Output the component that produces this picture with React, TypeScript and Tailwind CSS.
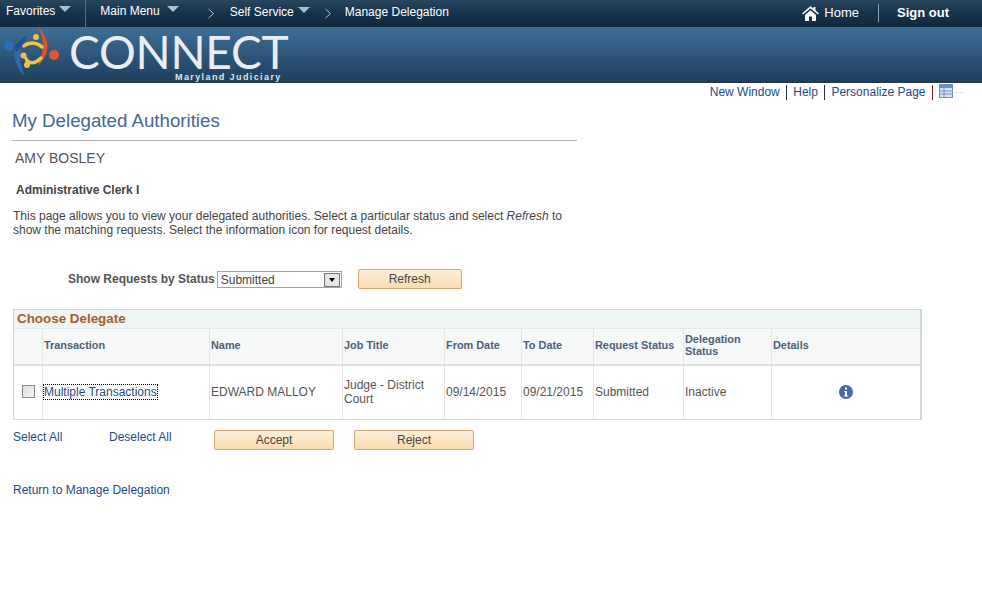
const COLUMNS = [
  { label: "", width: "w-[29px]" },
  { label: "Transaction", width: "w-[167px]" },
  { label: "Name", width: "w-[133px]" },
  { label: "Job Title", width: "w-[102px]" },
  { label: "From Date", width: "w-[77px]" },
  { label: "To Date", width: "w-[72px]" },
  { label: "Request Status", width: "w-[90px]" },
  { label: "Delegation Status", width: "w-[88px]" },
  { label: "Details", width: "flex-1" },
]

function Caret() {
  return <span className="block w-0 h-0 border-x-[6px] border-x-transparent border-t-[6px] border-t-[#a9c0d6]" />
}

function Chevron() {
  return (
    <svg className="block" width="8" height="11" viewBox="0 0 8 11" fill="none" stroke="#b5c4d2" strokeWidth="1">
      <path d="M1.5 1L6.5 5.5L1.5 10" />
    </svg>
  )
}

function Logo() {
  return (
    <svg className="block" width="58" height="54" viewBox="3 26 58 54" fill="none">
      <path d="M38 27C47 36 54 50 38 66C44 52 45 40 38 27Z" fill="#d9552c" />
      <path d="M25 77C12 62 9 46 28 35C31 34 27 38 24 41C18 50 19 62 25 77Z" fill="#2f6aa8" />
      <path d="M14 48C17 43 22 38 28 35L23 44L17 52Z" fill="#24508a" />
      <circle cx="9" cy="46" r="5" fill="#2e6db4" />
      <circle cx="54" cy="55" r="5" fill="#e0562c" />
      <circle cx="36" cy="37" r="3" fill="#f0c050" />
      <circle cx="23.5" cy="55.5" r="3" fill="#f0c050" />
      <circle cx="27" cy="65" r="3" fill="#f0c050" />
      <path d="M24 46C29 42 37 42 42 47" stroke="#f0c050" strokeWidth="3.5" strokeLinecap="round" />
      <path d="M27 61C31 64 36 63 41 58" stroke="#f0c050" strokeWidth="3.5" strokeLinecap="round" />
      <path d="M24 56C26 58 27 60 28 62" stroke="#f0c050" strokeWidth="3" strokeLinecap="round" />
    </svg>
  )
}

function OrangeButton({ label, width }: { label: string; width: string }) {
  return (
    <button className={`${width} h-5 border border-[#d2a877] rounded-[2px] bg-gradient-to-b from-[#fdeed9] to-[#fbdcb0] text-xs text-[#444]`}>
      {label}
    </button>
  )
}

export default function App() {
  return (
    <div className="h-[615px] bg-white font-['Liberation_Sans',Arial,sans-serif] overflow-hidden">
      {/* Top nav */}
      <div className="h-[27px] flex items-center bg-gradient-to-b from-[#29475f] via-[#16324b] to-[#10293f] text-xs text-white">
        <span className="ml-[6px] -mt-[5px]">Favorites</span>
        <span className="ml-[4px] -mt-[9px]"><Caret /></span>
        <span className="ml-[14px] w-px h-[27px] bg-[#55708a]" />
        <span className="ml-[14px] -mt-[5px]">Main Menu</span>
        <span className="ml-[7px] -mt-[9px]"><Caret /></span>
        <span className="ml-[28px]"><Chevron /></span>
        <span className="ml-[15px] -mt-[4px]">Self Service</span>
        <span className="ml-[4px] -mt-[7px]"><Caret /></span>
        <span className="ml-[14px]"><Chevron /></span>
        <span className="ml-[13px] -mt-[4px]">Manage Delegation</span>
        <div className="ml-auto flex items-center -mt-[1px]">
          <svg width="17" height="15" viewBox="0 0 17 15" fill="white">
            <path d="M8.5 0L0 7.5L1 8.6L8.5 2.2L16 8.6L17 7.5L13.5 4.4V1H11.5V2.6ZM3 9V15H7V10.5H10V15H14V9L8.5 4.2Z" />
          </svg>
          <span className="ml-[5px] text-[13px]">Home</span>
          <span className="ml-[19px] w-px h-[18px] bg-[#8fa3b5]" />
          <span className="ml-[18px] mr-[33px] text-[13px] font-bold">Sign out</span>
        </div>
      </div>

      {/* Banner */}
      <div className="relative h-[56px] flex bg-gradient-to-b from-[#3f6f97] to-[#1d3f5e] border-b border-[#24384a]">
        <div className="ml-[3px] -mt-[1px]"><Logo /></div>
        <span className="ml-[8px] -mt-[5px] font-['Lato',sans-serif] text-[46px] leading-[60px] tracking-[-0.2px] text-[#e9edf0]">CONNECT</span>
        <span className="absolute left-[175px] top-[45px] text-[9px] leading-[10px] font-bold tracking-[1.4px] text-[#dfe5ea]">Maryland Judiciary</span>
      </div>

      {/* Page links */}
      <div className="h-[18px] flex justify-end items-center pr-[28px] text-xs text-[#1f4a86]">
        <span>New Window</span>
        <span className="mx-[6px] w-[1.5px] h-[15px] bg-[#1d2f5f]" />
        <span>Help</span>
        <span className="mx-[6px] w-[1.5px] h-[15px] bg-[#1d2f5f]" />
        <span>Personalize Page</span>
        <span className="mx-[6px] w-[1.5px] h-[15px] bg-[#7a1f2a]" />
        <svg width="14" height="14" viewBox="0 0 14 14" className="-mt-[2px]">
          <rect x="0.5" y="0.5" width="13" height="13" fill="#d8e4f5" stroke="#6d8fc7" />
          <rect x="1" y="1" width="12" height="3" fill="#6d8fc7" />
          <path d="M1 7H13M1 10H13M5 4V13" stroke="#6d8fc7" />
        </svg>
        <span className="ml-[1px] -mr-[9px] w-[9px] h-px bg-[#dde3e8]" />
      </div>

      {/* Heading */}
      <div className="ml-3 w-[565px] h-[40px] border-b border-[#b4b4b4] flex items-center pt-[2px]">
        <h1 className="text-[18.7px] text-[#456791]">My Delegated Authorities</h1>
      </div>
      <div className="ml-[15px] mt-[9px] text-sm leading-4 text-[#555]">AMY BOSLEY</div>
      <div className="ml-4 mt-[17px] text-xs leading-[14px] font-bold text-[#444]">Administrative Clerk I</div>
      <p className="ml-[13px] mt-[12px] w-[565px] text-xs leading-[14px] text-[#444]">
        This page allows you to view your delegated authorities. Select a particular status and select <i>Refresh</i> to show the matching requests. Select the information icon for request details.
      </p>

      {/* Status filter */}
      <div className="ml-[68px] mt-[32px] h-5 flex items-center">
        <span className="text-xs font-bold text-[#555]">Show Requests by Status</span>
        <div className="ml-[2px] mt-[1px] w-[125px] h-[17px] border border-[#a5a5a5] flex items-center justify-between pl-[3px] pr-[1px] text-xs text-[#444]">
          Submitted
          <span className="w-4 h-[14px] border border-[#777] bg-[#e6e6e6] flex items-center justify-center">
            <span className="w-0 h-0 border-x-[3px] border-x-transparent border-t-[4px] border-t-black" />
          </span>
        </div>
        <div className="ml-[16px] flex"><OrangeButton label="Refresh" width="w-[104px]" /></div>
      </div>

      {/* Choose Delegate grid */}
      <div className="ml-[13px] mt-[20px] w-[909px] border-x border-t border-[#d0d7d8] border-r-2">
        <div className="h-[18px] bg-[#eff4f4] flex items-center pl-[3px] text-[13.4px] font-bold text-[#a5602a]">Choose Delegate</div>
        <div className="h-[38px] flex bg-[#f7f8f8] border-t border-b-2 border-t-[#e6e9e9] border-b-[#dfe1e1]">
          {COLUMNS.map((col) => (
            <div
              key={col.label}
              className={`${col.width} shrink-0 border-r border-[#e6e6e6] last:border-r-0 flex items-center pl-[1px] pb-[4px] text-[10.9px] leading-3 font-bold text-[#4d6078]`}
            >
              {col.label}
            </div>
          ))}
        </div>
        <div className="h-[54px] flex border-b border-[#dedede] text-xs leading-[14px] text-[#555]">
          <div className="w-[29px] shrink-0 border-r border-[#e6e6e6] flex items-center pl-[8px] pb-[2px]">
            <span className="w-[13px] h-[13px] border border-[#888] bg-gradient-to-br from-[#dcdcdc] to-[#f7f7f7]" />
          </div>
          <div className="w-[167px] shrink-0 border-r border-[#e6e6e6] flex items-center pl-[1px] pb-[2px]">
            <span className="text-[#1f4a86] outline-1 outline-dotted outline-black">Multiple Transactions</span>
          </div>
          <div className="w-[133px] shrink-0 border-r border-[#e6e6e6] flex items-center pl-[1px] pb-[2px]">EDWARD MALLOY</div>
          <div className="w-[102px] shrink-0 border-r border-[#e6e6e6] flex items-center pl-[1px] pb-[2px]">Judge - District<br />Court</div>
          <div className="w-[77px] shrink-0 border-r border-[#e6e6e6] flex items-center pl-[1px] pb-[2px]">09/14/2015</div>
          <div className="w-[72px] shrink-0 border-r border-[#e6e6e6] flex items-center pl-[1px] pb-[2px]">09/21/2015</div>
          <div className="w-[90px] shrink-0 border-r border-[#e6e6e6] flex items-center pl-[1px] pb-[2px]">Submitted</div>
          <div className="w-[88px] shrink-0 border-r border-[#e6e6e6] flex items-center pl-[1px] pb-[2px]">Inactive</div>
          <div className="flex-1 flex items-center justify-center pb-[2px]">
            <svg width="14" height="14" viewBox="0 0 14 14">
              <circle cx="7" cy="7" r="7" fill="#4a66ad" />
              <rect x="6" y="2.5" width="2" height="2" fill="white" />
              <path d="M5 6H8V10.5H9.2V11.5H4.8V10.5H6V7H5Z" fill="white" />
            </svg>
          </div>
        </div>
      </div>

      {/* Grid actions */}
      <div className="ml-[13px] mt-[10px] h-5 flex items-center text-xs text-[#1f4a86]">
        <span className="w-[96px] -mt-[6px]">Select All</span>
        <span className="w-[105px] -mt-[6px]">Deselect All</span>
        <OrangeButton label="Accept" width="w-[120px]" />
        <div className="ml-[20px] flex"><OrangeButton label="Reject" width="w-[120px]" /></div>
      </div>

      <div className="ml-[13px] mt-[33px] text-xs leading-[14px] text-[#1f4a86]">Return to Manage Delegation</div>
    </div>
  )
}
